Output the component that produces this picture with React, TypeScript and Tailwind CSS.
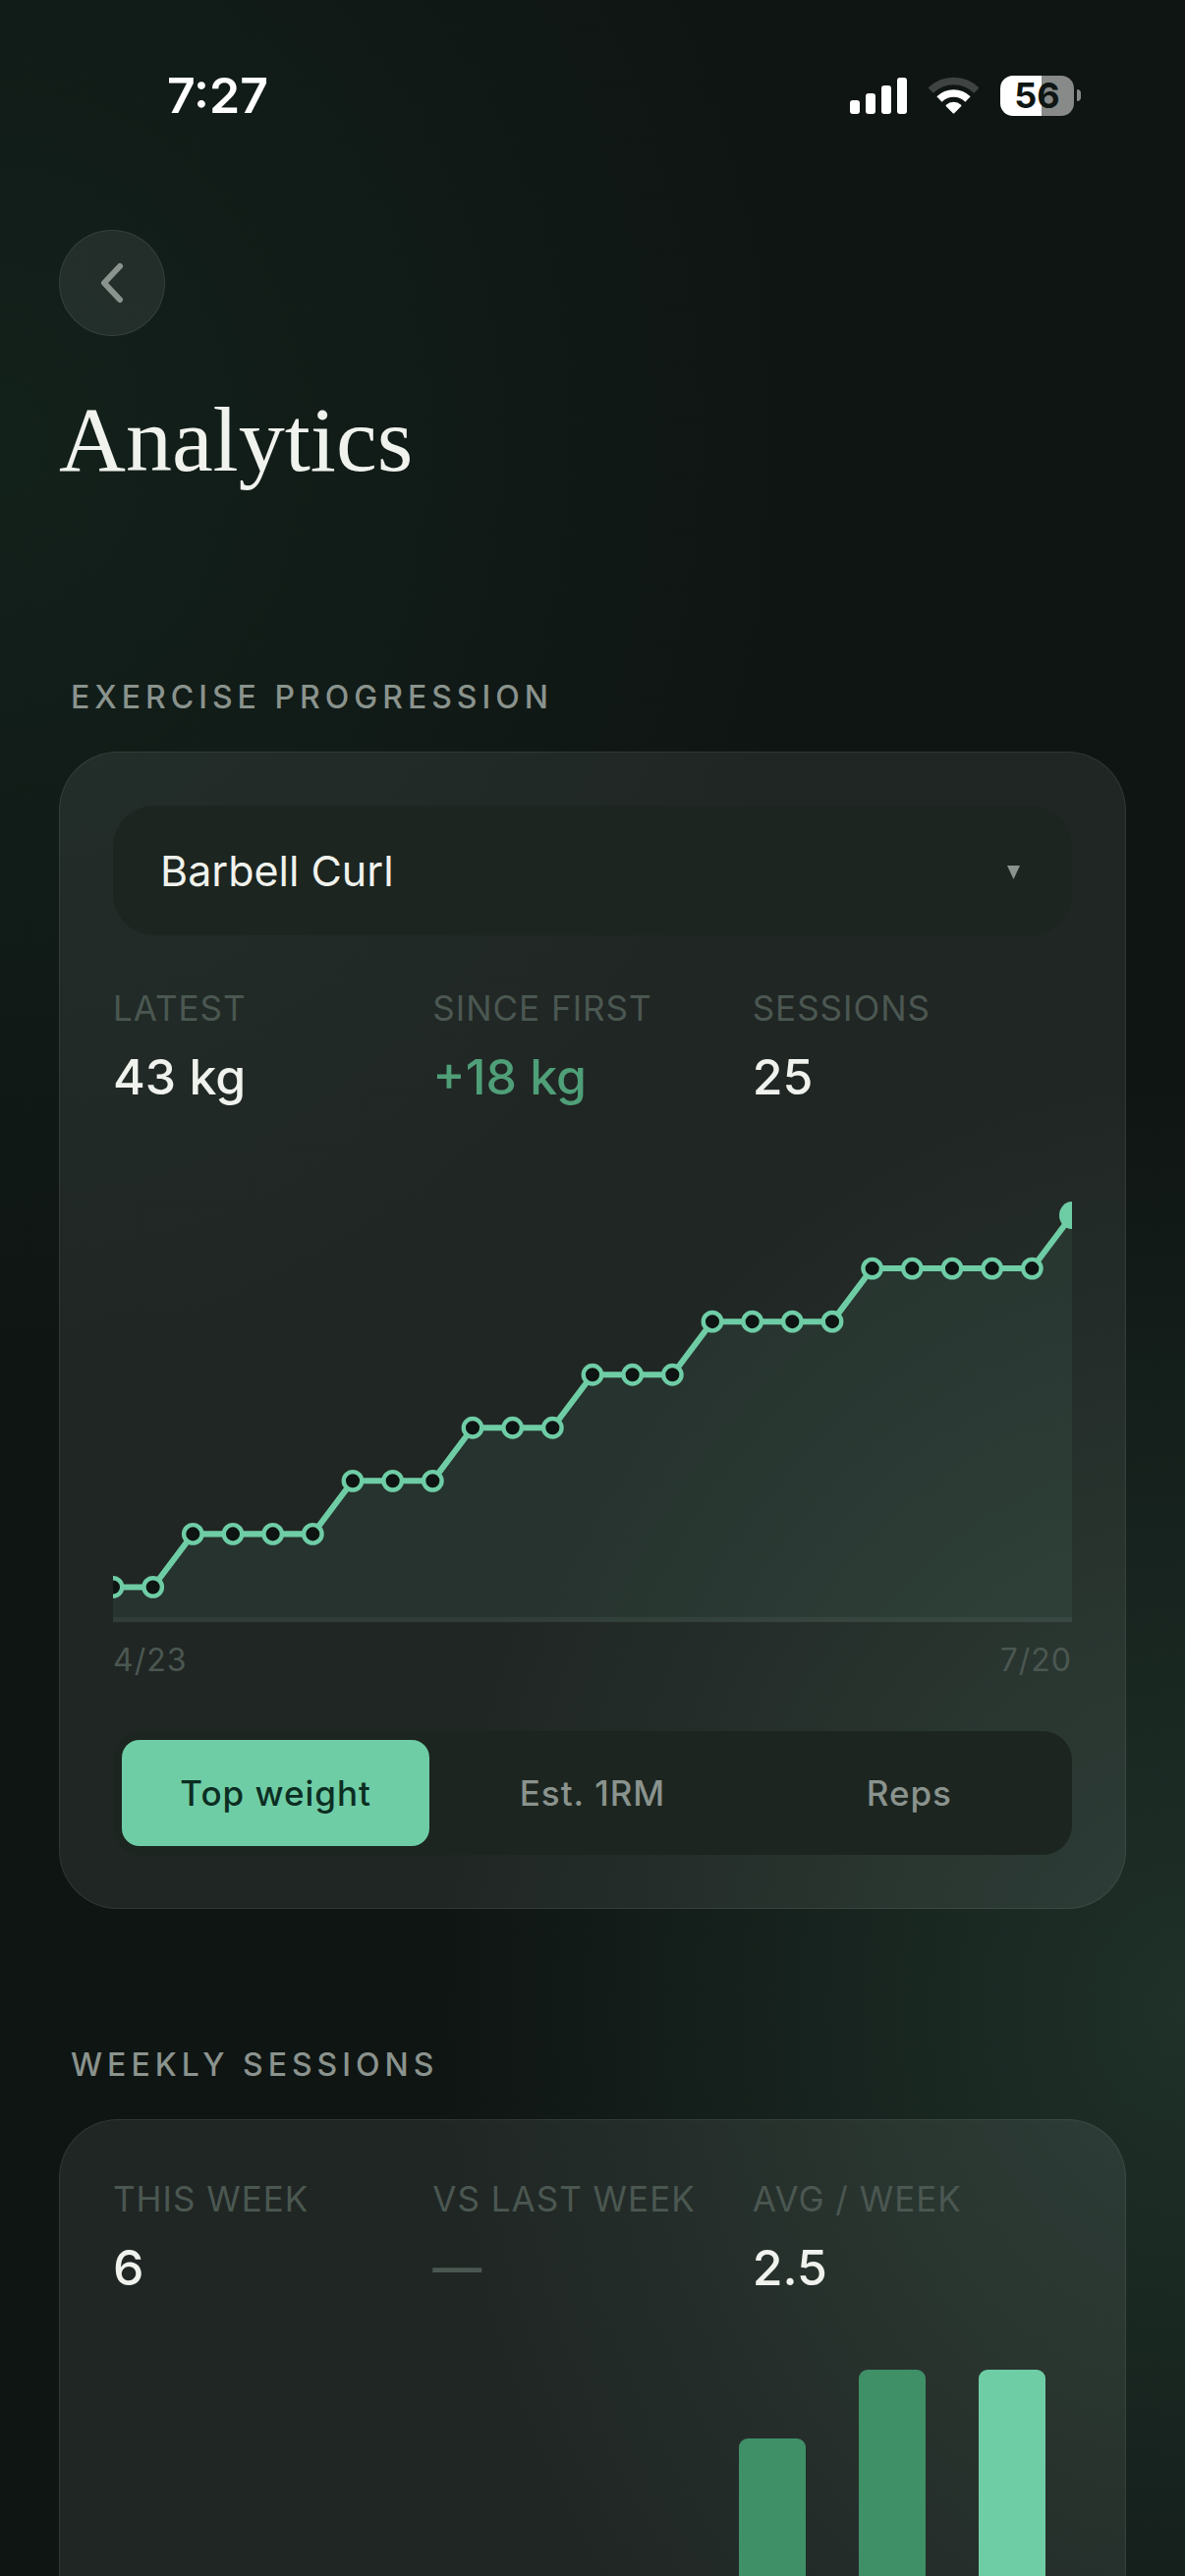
import React, { useState } from 'react';

type Metric = 'weight' | 'orm' | 'reps';

interface Stat {
  label: string;
  value: string;
  tone?: 'default' | 'up' | 'muted';
}

const exercises = ['Barbell Curl', 'Bench Press', 'Deadlift', 'Squat'];

const metrics: { id: Metric; label: string }[] = [
  { id: 'weight', label: 'Top weight' },
  { id: 'orm', label: 'Est. 1RM' },
  { id: 'reps', label: 'Reps' },
];

const progressionStats: Stat[] = [
  { label: 'Latest', value: '43 kg' },
  { label: 'Since first', value: '+18 kg', tone: 'up' },
  { label: 'Sessions', value: '25' },
];

const weeklyStats: Stat[] = [
  { label: 'This week', value: '6' },
  { label: 'vs last week', value: '—', tone: 'muted' },
  { label: 'Avg / week', value: '2.5' },
];

// weight steps above the first session
const levels = [0, 0, 1, 1, 1, 1, 2, 2, 2, 3, 3, 3, 4, 4, 4, 5, 5, 5, 5, 6, 6, 6, 6, 6, 7];

const weeks = [0, 1, 1, 0, 1, 5, 6, 6];

const StatusBar = () => (
  <div className="flex items-center justify-between pt-[67px] pr-[106px] pl-[170px]">
    <span className="text-[50px] leading-[60px] font-semibold text-white">7:27</span>
    <div className="flex items-center">
      <svg className="h-[38px] w-[58px]" viewBox="0 0 58 38" fill="#fff" aria-hidden="true">
        <rect x="0" y="24" width="10" height="14" rx="3" />
        <rect x="16" y="17" width="10" height="21" rx="3" />
        <rect x="32" y="9" width="10" height="29" rx="3" />
        <rect x="48" y="1" width="10" height="37" rx="3" />
      </svg>
      <svg className="ml-[22px] h-[38px] w-[51px]" viewBox="0 0 51 38" fill="none" aria-hidden="true">
        <path d="M2.2 14.2a33 33 0 0 1 46.6 0" stroke="#3f4341" strokeWidth="7.5" />
        <path d="M11 23a20.500 20.500 0 0 1 29 0" stroke="#fff" strokeWidth="7.5" />
        <path d="M25.500 36.500 18.600 29.500a10 10 0 0 1 13.800 0Z" fill="#fff" stroke="#fff" strokeWidth="2" strokeLinejoin="round" />
      </svg>
      <div className="ml-[22px] flex h-[41px] w-[75px] items-center justify-center rounded-[13px] bg-linear-to-r from-white from-56% to-[#878a88] to-56%">
        <span className="text-[36px] leading-[41px] font-bold text-[#0f1613]">56</span>
      </div>
      <div className="ml-[3px] h-3 w-1 rounded-r-full bg-[#878a88]" />
    </div>
  </div>
);

const toneClass = {
  default: 'text-[#f0f2ed]',
  up: 'text-[#4f9f78]',
  muted: 'text-[#4b5751]',
};

const StatRow = ({ stats }: { stats: Stat[] }) => (
  <dl className="grid grid-cols-3">
    {stats.map((stat) => (
      <div key={stat.label} className="flex flex-col gap-[14px]">
        <dt className="text-[35px] leading-[52px] tracking-[1px] whitespace-nowrap text-[#4b5751] uppercase">
          {stat.label}
        </dt>
        <dd className={`text-[50px] leading-[60px] font-medium ${toneClass[stat.tone ?? 'default']}`}>
          {stat.value}
        </dd>
      </div>
    ))}
  </dl>
);

const Section = ({ title, children }: { title: string; children: React.ReactNode }) => (
  <section>
    <h2 className="mb-[35px] pl-3 text-[32px] leading-10 font-medium tracking-[5px] text-[#8a938d] uppercase">
      {title}
    </h2>
    <div className="rounded-[60px] border border-white/[0.07] bg-white/[0.075] p-[54px]">{children}</div>
  </section>
);

const ProgressChart = () => {
  const points = levels.map((level, i) => ({
    x: (i * 975) / (levels.length - 1),
    y: 428 - level * 54,
  }));
  const line = points.map((p) => `${p.x},${p.y}`).join(' ');
  const last = points[points.length - 1];

  return (
    <svg className="block w-full" viewBox="0 0 975 464" role="img" aria-label="Top weight over time">
      <polygon points={`0,464 ${line} 975,464`} fill="#6fcda6" fillOpacity="0.08" />
      <line x1="0" y1="461" x2="975" y2="461" stroke="#fff" strokeOpacity="0.05" strokeWidth="5" />
      <polyline points={line} fill="none" stroke="#6fcda6" strokeWidth="6" strokeLinejoin="round" />
      {points.slice(0, -1).map((p) => (
        <circle key={p.x} cx={p.x} cy={p.y} r="9.2" fill="#0d1412" stroke="#6fcda6" strokeWidth="4.4" />
      ))}
      <ellipse cx={last.x} cy={last.y} rx="13" ry="14" fill="#6fcda6" />
    </svg>
  );
};

const WeeklyBars = () => (
  <div className="mt-[74px] grid h-[420px] grid-cols-8 items-end">
    {weeks.map((count, i) => (
      <div
        key={i}
        className={`mx-auto w-[68px] rounded-t-[9px] ${i === weeks.length - 1 ? 'bg-[#6fcda6]' : 'bg-[#3f8f67]'}`}
        style={{ height: `${(count / Math.max(...weeks)) * 100}%` }}
      />
    ))}
  </div>
);

const App: React.FC = () => {
  const [exercise, setExercise] = useState(exercises[0]);
  const [metric, setMetric] = useState<Metric>('weight');

  return (
    <div className="h-screen overflow-y-auto bg-[#0f1513] bg-[radial-gradient(820px_950px_at_0%_17%,#13211b,transparent),radial-gradient(760px_950px_at_100%_78%,#1f3129,transparent)] font-['Inter','Liberation_Sans',sans-serif] [scrollbar-width:none]">
      <StatusBar />

      <main className="px-[60px] pt-[107px] pb-[60px]">
        <button
          type="button"
          aria-label="Back"
          className="flex size-[108px] items-center justify-center rounded-full border border-white/[0.08] bg-white/[0.075]"
        >
          <svg className="h-[42px] w-[24px]" viewBox="0 0 24 42" fill="none" aria-hidden="true">
            <path d="M20 4 4 21l16 17" stroke="#8a938d" strokeWidth="6" strokeLinecap="round" strokeLinejoin="round" />
          </svg>
        </button>

        <h1 className="mt-[50px] font-['Liberation_Serif',serif] text-[94px] leading-[110px] text-[#f0f2ed]">
          Analytics
        </h1>

        <div className="mt-[188px] flex flex-col gap-[139px]">
          <Section title="Exercise progression">
            <div className="relative">
              <select
                aria-label="Exercise"
                value={exercise}
                onChange={(e) => setExercise(e.target.value)}
                className="block h-[132px] w-full appearance-none rounded-[42px] bg-[#1c2520] px-12 text-[43px] text-[#f0f2ed]"
              >
                {exercises.map((name) => (
                  <option key={name}>{name}</option>
                ))}
              </select>
              <div className="pointer-events-none absolute inset-y-0 right-[53px] flex items-center pt-1">
                <svg className="h-[14px] w-[13px]" viewBox="0 0 13 14" aria-hidden="true">
                  <path d="M0 0h13L6.500 14Z" fill="#8a938d" />
                </svg>
              </div>
            </div>

            <div className="mt-12">
              <StatRow stats={progressionStats} />
            </div>

            <div className="mt-[61px]">
              <ProgressChart />
              <div className="mt-[19px] flex justify-between text-[32px] leading-10 tracking-[1px] text-[#4b5751]">
                <span>4/23</span>
                <span>7/20</span>
              </div>
            </div>

            <div className="mt-[52px] grid grid-cols-3 gap-[9px] rounded-[30px] bg-[#1c2520] p-[9px]">
              {metrics.map((m) => (
                <button
                  key={m.id}
                  type="button"
                  aria-pressed={metric === m.id}
                  onClick={() => setMetric(m.id)}
                  className={`h-[108px] rounded-[18px] text-[35px] font-medium tracking-[1px] ${
                    metric === m.id ? 'bg-[#6fcda6] text-[#0c2e22]' : 'text-[#8a938d]'
                  }`}
                >
                  {m.label}
                </button>
              ))}
            </div>
          </Section>

          <Section title="Weekly sessions">
            <StatRow stats={weeklyStats} />
            <WeeklyBars />
          </Section>
        </div>
      </main>
    </div>
  );
};

export default App;
